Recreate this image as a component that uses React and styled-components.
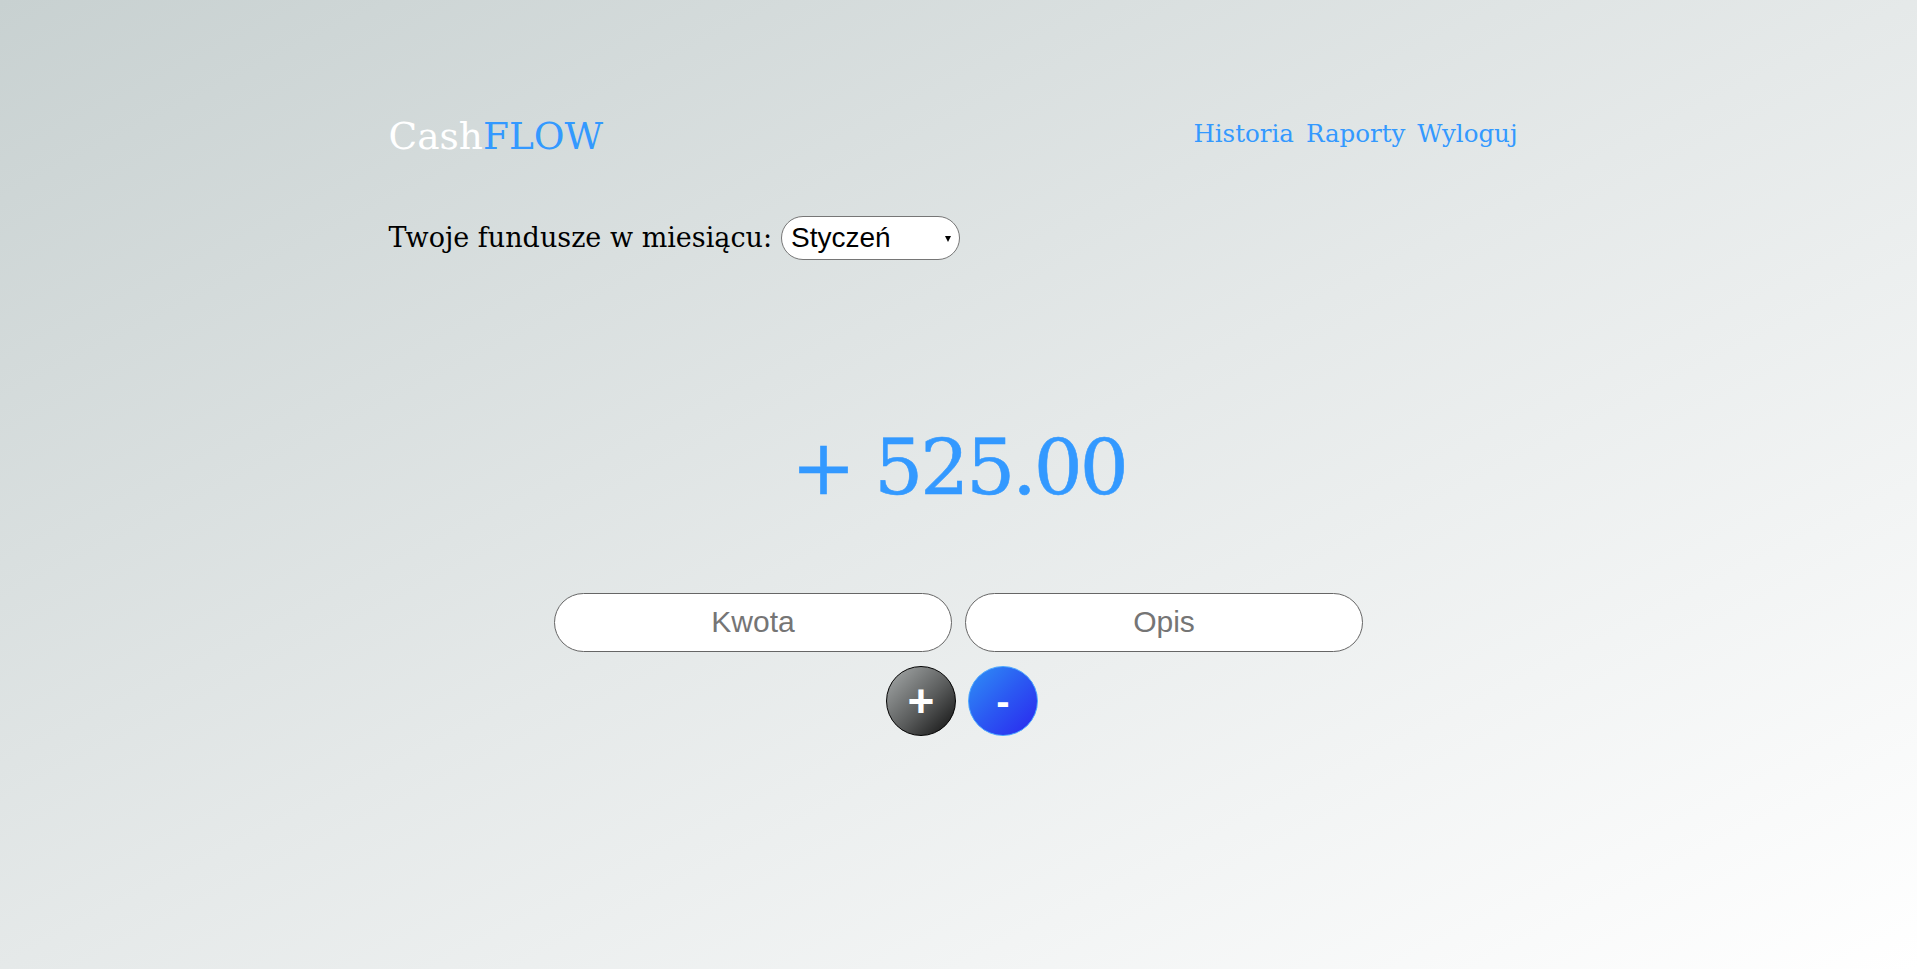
import React from "react";
import styled, { createGlobalStyle } from "styled-components";

const GlobalStyle = createGlobalStyle`
  html, body {
    margin: 0;
    padding: 0;
  }
  body {
    min-height: 100vh;
    background: linear-gradient(to bottom right, #c8d1d1 0%, #e5e9e9 50%, #ffffff 100%);
    font-family: "DejaVu Serif", "Liberation Serif", serif;
  }
`;

const Page = styled.div`
  min-height: 100vh;
`;

const Container = styled.div`
  width: 1170px;
  margin: 0 auto;
  padding: 118px 15px 0;
  box-sizing: border-box;
`;

const Header = styled.header`
  display: flex;
  justify-content: space-between;
  align-items: flex-start;
`;

const Logo = styled.div`
  font-size: 37.5px;
  line-height: 1;
  color: #ffffff;
  user-select: none;

  span {
    color: #3399ff;
  }
`;

const Nav = styled.nav`
  display: flex;
  gap: 12px;
  margin: 4px 11px 0 0;
`;

const NavLink = styled.a`
  font-size: 24.5px;
  line-height: 1;
  color: #3399ff;
  text-decoration: none;
  cursor: pointer;
  &:hover {
    text-decoration: underline;
  }
`;

const MonthRow = styled.div`
  display: flex;
  align-items: center;
  gap: 9px;
  margin-top: 60px;
`;

const Label = styled.span`
  font-size: 27px;
  color: #000;
`;

const SelectWrap = styled.div`
  position: relative;
  &::after {
    content: "";
    position: absolute;
    right: 9px;
    top: 50%;
    margin-top: -2px;
    border-left: 3.5px solid transparent;
    border-right: 3.5px solid transparent;
    border-top: 6px solid #000;
    pointer-events: none;
  }
`;

const Select = styled.select`
  appearance: none;
  width: 179px;
  height: 44px;
  padding: 0 20px 0 9px;
  border: 1px solid #767676;
  border-radius: 22px;
  background: #fff;
  font-family: "Liberation Sans", Arial, sans-serif;
  font-size: 28px;
  color: #000;
  outline: none;
`;

const Amount = styled.div`
  margin-top: 169px;
  text-align: center;
  font-size: 77px;
  line-height: 1;
  letter-spacing: -3px;
  color: #3399ff;
  -webkit-text-stroke: 0.6px #3399ff;
`;

const InputRow = styled.div`
  display: flex;
  justify-content: center;
  gap: 13px;
  margin-top: 87px;
`;

const Field = styled.input`
  width: 398px;
  height: 59px;
  box-sizing: border-box;
  border: 1px solid #666;
  border-radius: 30px;
  background: #fff;
  text-align: center;
  font-family: "Liberation Sans", Arial, sans-serif;
  font-size: 30px;
  color: #333;
  outline: none;
  &::placeholder {
    color: #757575;
  }
`;

const ButtonRow = styled.div`
  display: flex;
  justify-content: center;
  gap: 12px;
  margin-top: 14px;
  padding-left: 7px;
`;

const RoundButton = styled.button`
  width: 70px;
  height: 70px;
  border-radius: 50%;
  box-sizing: border-box;
  padding: 0;
  display: flex;
  align-items: center;
  justify-content: center;
  font-family: "Liberation Sans", Arial, sans-serif;
  font-weight: bold;
  font-size: ${({ $minus }) => ($minus ? "40px" : "46px")};
  line-height: 1;
  color: #fff;
  cursor: pointer;
  border: 1px solid ${({ $minus }) => ($minus ? "#4aa6ff" : "#000")};
  background: ${({ $minus }) =>
    $minus
      ? "linear-gradient(135deg, #2e90f6 0%, #2b58f2 50%, #2a26ef 100%)"
      : "linear-gradient(135deg, #a9adad 0%, #5a5c5c 55%, #0e0e0e 100%)"};
`;

const App = () => {
  return (
    <Page>
      <GlobalStyle />
      <Container>
        <Header>
          <Logo>
            Cash<span>FLOW</span>
          </Logo>
          <Nav>
            <NavLink>Historia</NavLink>
            <NavLink>Raporty</NavLink>
            <NavLink>Wyloguj</NavLink>
          </Nav>
        </Header>

        <MonthRow>
          <Label>Twoje fundusze w miesiącu:</Label>
          <SelectWrap>
            <Select defaultValue="1">
              <option value="1">Styczeń</option>
              <option value="2">Luty</option>
              <option value="3">Marzec</option>
              <option value="4">Kwiecień</option>
              <option value="5">Maj</option>
              <option value="6">Czerwiec</option>
              <option value="7">Lipiec</option>
              <option value="8">Sierpień</option>
              <option value="9">Wrzesień</option>
              <option value="10">Październik</option>
              <option value="11">Listopad</option>
              <option value="12">Grudzień</option>
            </Select>
          </SelectWrap>
        </MonthRow>

        <Amount>+ 525.00</Amount>

        <InputRow>
          <Field type="text" placeholder="Kwota" />
          <Field type="text" placeholder="Opis" />
        </InputRow>

        <ButtonRow>
          <RoundButton>+</RoundButton>
          <RoundButton $minus>-</RoundButton>
        </ButtonRow>
      </Container>
    </Page>
  );
};

export default App;
